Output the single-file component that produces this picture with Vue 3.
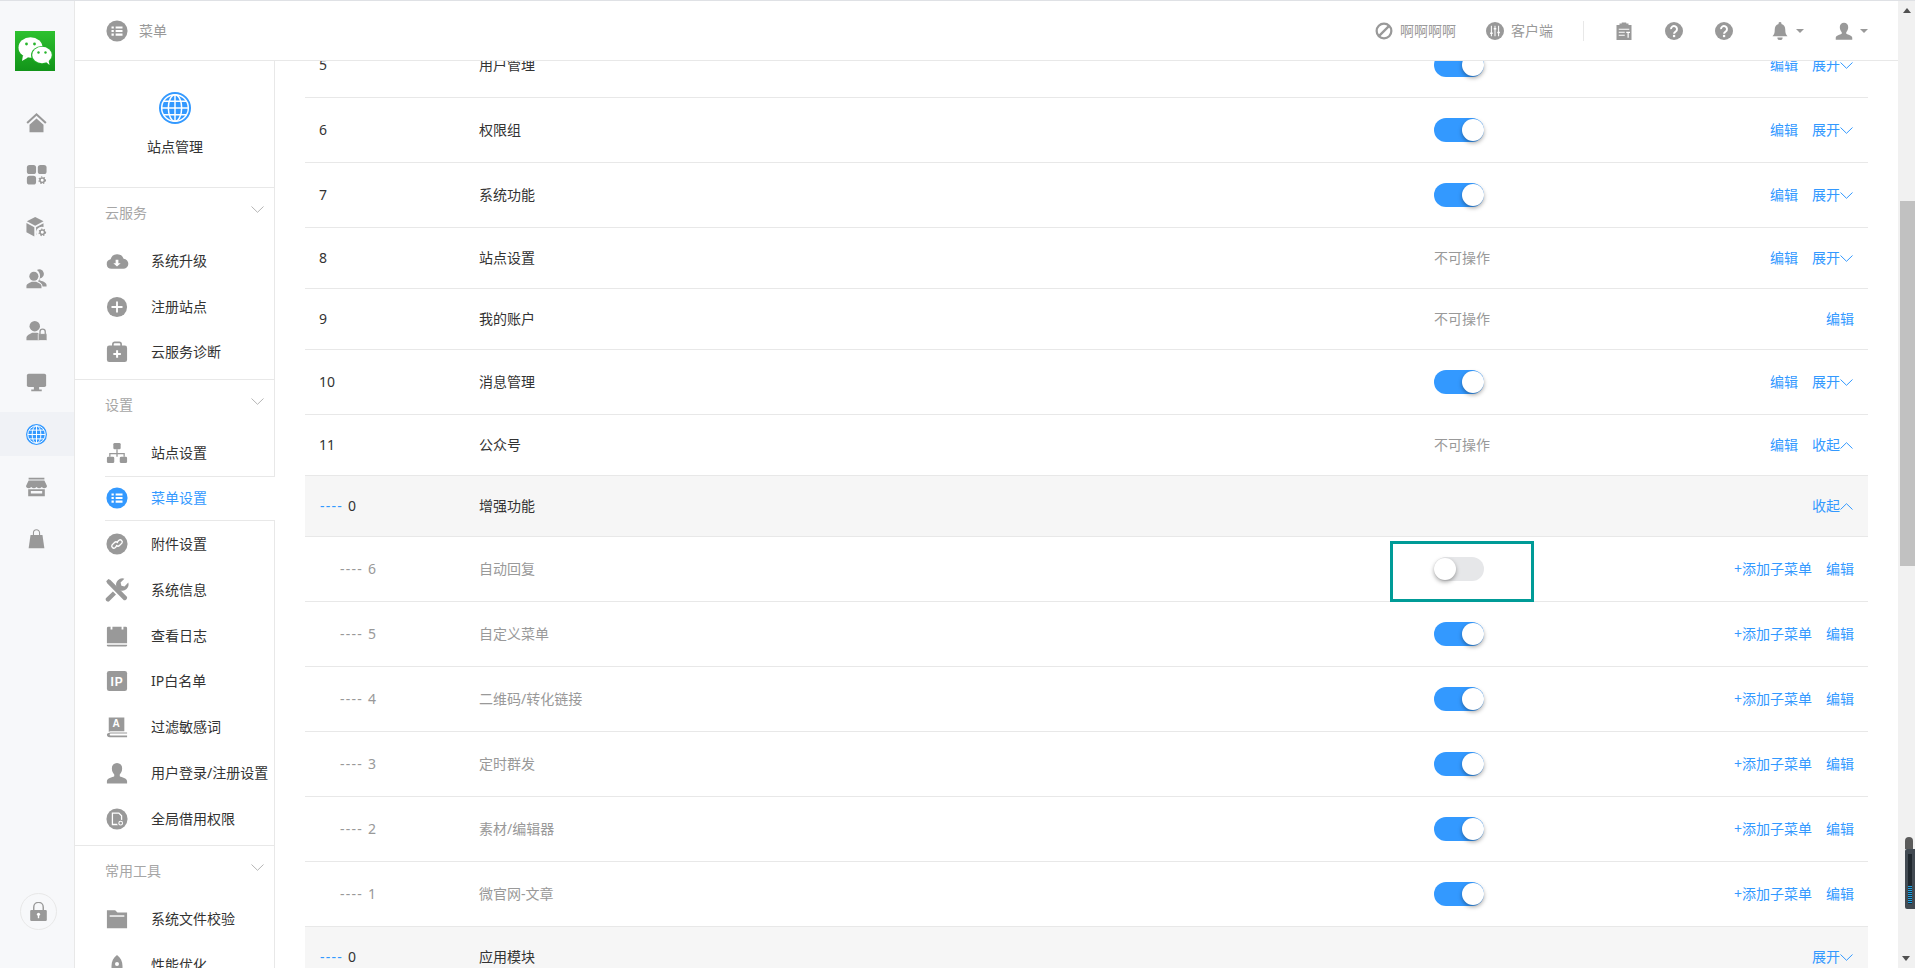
<script setup>
const gear = (x, y, r = 3) =>
  `<circle cx="${x}" cy="${y}" r="${r + 2.2}" fill="#fff"/><circle cx="${x}" cy="${y}" r="${r}" fill="none" stroke="currentColor" stroke-width="1.8"/><circle cx="${x}" cy="${y}" r="${r + 1.2}" fill="none" stroke="currentColor" stroke-width="1.3" stroke-dasharray="1.6 1.6"/>`
const globe = `<circle cx="12" cy="12" r="12"/><g fill="none" stroke="#fff" stroke-width="1.1"><circle cx="12" cy="12" r="10"/><ellipse cx="12" cy="12" rx="5" ry="10"/><path d="M12 2v20M2 12h20M3.6 7h16.8M3.6 17h16.8"/></g>`
const icons = {
  home: `<path d="M12 1 .5 11.6l1.600 1.800L12 4.400l9.900 9 1.600-1.800z"/><path d="M4 14.600 12 7.400l8 7.200V23H4z"/>`,
  apps: `<rect x="1" y="1" width="10.500" height="10.500" rx="3"/><rect x="13.500" y="1" width="10" height="10.500" rx="3"/><rect x="1" y="13.500" width="10.500" height="10" rx="3"/>${gear(18.5, 18.5, 2.6)}`,
  box: `<path d="M10.500 1 20 6l-9.500 5L1 6zM.5 8l9 4.800v10.700l-9-4.800zM11.500 12.800l8.500-4.600v4.400a6.500 6.500 0 0 0-8 8.500l-.5.3z"/>${gear(18.6, 18.6, 2.6)}`,
  users: `<circle cx="9" cy="9.500" r="5.200"/><path d="M.5 23v-2.400c0-2.700 3.800-3.700 6-5h5.200c2.200 1.300 6 2.300 6 5V23z"/><path d="M12.500 2.300a5.200 5.200 0 1 1 3.400 9.600l-.6 2c2.500 1.100 8.200 1.900 8.200 5.600V21h-4.500c-.3-3.200-3-4.600-5.400-5.800 1.600-1.700 2.400-3.600 2.400-5.800 0-3-1.100-5.200-3.500-7.100z"/>`,
  ulock: `<circle cx="10" cy="7" r="6"/><path d="M.5 23v-2.500c0-3.200 4-4.500 6.500-6h6c1 .6 2 1 3 1.500v7z"/><rect x="14" y="15.500" width="10" height="8" rx="1" stroke="#fff" stroke-width=".8"/><path d="M16 16v-2.500a3 3 0 0 1 6 0V16" fill="none" stroke="currentColor" stroke-width="1.500"/>`,
  monitor: `<rect x="1" y="2" width="22" height="15" rx="2"/><path d="M9 17h6v3H9zM6 20h12v2H6z"/>`,
  globe,
  store: `<path d="M3 2h18v2H3zM3 5h18l3 6.500c0 2-2 2.500-3 2.500s-2-.5-3-1.500c-1 1-2 1.500-3 1.500s-2-.5-3-1.500c-1 1-2 1.500-3 1.500s-2-.5-3-1.500c-1 1-2 1.500-3 1.500s-3-.5-3-2.500z"/><path fill-rule="evenodd" d="M2.500 15H21.500v8H2.500zM5.500 17v3h13v-3z"/>`,
  bag: `<path d="M5.200 8h13.600L21 23H3z"/><path d="M8.500 10V5.500a3.500 3.500 0 0 1 7 0V10" fill="none" stroke="currentColor" stroke-width="1.200"/>`,
  lock: `<rect x="1.500" y="10" width="21" height="14" rx="1.500"/><path d="M6 11V6.500a6 6 0 0 1 12 0V11" fill="none" stroke="currentColor" stroke-width="1.800"/><circle cx="12" cy="15.500" r="2" fill="#fff"/><path d="M11.100 16h1.800v4.500h-1.800z" fill="#fff"/>`,
  cloud: `<path d="M6 20.500a5.200 5.200 0 0 1-1-10.300A7.500 7.500 0 0 1 19.200 9.500 5.500 5.500 0 0 1 18.500 20.500z"/><path d="M10.500 10.500h3v4h2.500L12 18l-4-3.500h2.500z" fill="#fff"/>`,
  plus: `<circle cx="12" cy="12" r="11"/><path d="M11 6h2v5h5v2h-5v5h-2v-5H6v-2h5z" fill="#fff"/>`,
  kit: `<rect x="1" y="5" width="22" height="18" rx="2.500"/><path d="M7.500 6V3.500a2 2 0 0 1 2-2h5a2 2 0 0 1 2 2V6" fill="none" stroke="currentColor" stroke-width="1.800"/><path d="M11 10h2.200v3h3v2.200h-3v3H11v-3H8v-2.200h3z" fill="#fff"/>`,
  sitemap: `<rect x="8" y="1" width="8" height="7" rx="1.500"/><path d="M11.300 8h1.400v4h7.800v4h-1.400v-2.600h-6.400V16h-1.400v-2.600H4.900V16H3.500v-4h7.800z"/><rect x="1" y="16" width="8" height="7" rx="1.500"/><rect x="15" y="16" width="8" height="7" rx="1.500"/>`,
  list: `<circle cx="12" cy="12" r="11.500"/><path d="M6 7h2.500v2.300H6zM10.500 7H18v2.300h-7.500zM6 10.900h2.500v2.300H6zM10.500 10.900H18v2.300h-7.500zM6 14.800h2.500v2.300H6zM10.500 14.800H18v2.300h-7.500z" fill="#fff"/>`,
  link: `<circle cx="12" cy="12" r="11.500"/><g fill="none" stroke="#fff" stroke-width="1.500" stroke-linecap="round"><path d="M12.800 9.200l1.300-1.300a2.300 2.300 0 0 1 3.200 3.200l-2.600 2.600a2.300 2.300 0 0 1-3.200 0"/><path d="M11.200 14.800l-1.300 1.300a2.300 2.300 0 0 1-3.200-3.200l2.600-2.600a2.300 2.300 0 0 1 3.200 0"/></g>`,
  tools: `<g transform="translate(12 12) scale(1.120) translate(-12 -12)"><path d="M1.500 3.400 3.600 1.300l2 .9 15.800 16.100c1.700 1.700-1.500 4.900-3.200 3.200L2.400 5.400z"/><path d="M23 4.800 19.300 8.500l-3-.7-.8-3L19.200 1a6.200 6.200 0 0 0-7.800 7.800L9.800 10.600l3.500 3.600 1.800-1.800A6.200 6.200 0 0 0 23 4.800zM8 13.500l3 3-6.600 6.500c-1.600 1.400-4.600-1.400-3-3.200z"/></g>`,
  cal: `<path d="M1 3.500A1.500 1.500 0 0 1 2.500 2H5v3h2V2h10v3h2V2h2.500A1.500 1.500 0 0 1 23 3.500V20H1z"/><path d="M1 21.500h22v.5a1.500 1.500 0 0 1-1.500 1.500h-19A1.500 1.500 0 0 1 1 22z"/>`,
  ip: `<rect x="1" y="1" width="22" height="22" rx="2.500"/><text x="12" y="17" text-anchor="middle" font-family="Liberation Sans" font-weight="700" font-size="13" fill="#fff" letter-spacing="1">IP</text>`,
  book: `<path d="M3 1.500h17v15H5a2.500 2.500 0 0 0-2 1z"/><text x="11" y="12.500" text-anchor="middle" font-family="Liberation Sans" font-weight="700" font-size="11" fill="#fff">A</text><path d="M5 18h18v1.200H5a1 1 0 0 0 0 2h18v2H4a3 3 0 0 1-3-3c0-1 2-2.200 4-2.200z"/>`,
  user: `<path d="M12 1a5.600 5.600 0 0 1 5.600 6c0 3-1.200 5-2.600 6.500v2c2 1.300 8 2 8 5.500v2.500H1V21c0-3.500 6-4.200 8-5.500v-2C7.600 12 6.400 10 6.400 7A5.600 5.600 0 0 1 12 1z"/>`,
  doc: `<circle cx="12" cy="12" r="11.500"/><path d="M7 5.500h7l3 3V18H7z" fill="none" stroke="#fff" stroke-width="1.400"/><circle cx="16" cy="16.500" r="3.800"/><circle cx="16" cy="16.500" r="2" fill="none" stroke="#fff" stroke-width="1.200"/>`,
  folder: `<path d="M1 2.500h9l2.500 2.500H23v17H1z"/><path d="M4 8h16v1.500H4z" fill="#fff"/>`,
  rocket: `<path d="M12 1c4 3 6 7 6 12v6l2.500 4h-17L6 19v-6c0-5 2-9 6-12z"/><circle cx="12" cy="11" r="2.200" fill="#fff"/>`,
  ban: `<circle cx="12" cy="12" r="9.800" fill="none" stroke="currentColor" stroke-width="3"/><path d="M18.500 5.500 5.500 18.500" fill="none" stroke="currentColor" stroke-width="3"/>`,
  eq: `<circle cx="12" cy="12" r="12"/><path d="M7.200 5v14M12 5v14M16.800 5v14" stroke="#fff" stroke-width="1.400"/><path d="M5.500 14h3.400v2H5.500zM10.300 8h3.400v2h-3.400zM15.100 13h3.400v2h-3.400z" fill="#fff"/>`,
  clip: `<path d="M2 4h4V2h3V.5h6V2h3v2h4v20H2z"/><path d="M5 9h14v1.300H5zM5 13h8v1.300H5zM5 17h8v1.300H5z" fill="#fff"/><path d="M15 13h5v1.500h-1.700V21h-1.600v-6.500H15z" fill="#fff"/>`,
  help: `<circle cx="12" cy="12" r="12"/><path d="M8 9.500a4 4 0 1 1 6.300 3.200c-1.300 1-2.200 1.500-2.200 3" fill="none" stroke="#fff" stroke-width="2.600"/><rect x="10.600" y="17.200" width="3" height="3" fill="#fff"/>`,
  bell: `<path d="M12 0a1.800 1.800 0 0 1 1.800 2.500C17.500 3.500 19 6.500 19 10c0 5 1 7 3 9H2c2-2 3-4 3-9 0-3.500 1.500-6.500 5.200-7.500A1.800 1.800 0 0 1 12 0z"/><path d="M8.500 20.500h7a3.500 3.500 0 0 1-7 0z"/>`
}

const rail = ['home', 'apps', 'box', 'users', 'ulock', 'monitor', 'globe', 'store', 'bag']
const groups = [
  { title: '云服务', items: [['cloud', '系统升级'], ['plus', '注册站点'], ['kit', '云服务诊断']] },
  {
    title: '设置',
    items: [
      ['sitemap', '站点设置'], ['list', '菜单设置', true], ['link', '附件设置'], ['tools', '系统信息'],
      ['cal', '查看日志'], ['ip', 'IP白名单'], ['book', '过滤敏感词'], ['user', '用户登录/注册设置'], ['doc', '全局借用权限']
    ]
  },
  { title: '常用工具', items: [['folder', '系统文件校验'], ['rocket', '性能优化']] }
]
const rows = [
  { no: '5', name: '用户管理', on: true, edit: true, fold: '展开' },
  { no: '6', name: '权限组', on: true, edit: true, fold: '展开' },
  { no: '7', name: '系统功能', on: true, edit: true, fold: '展开' },
  { no: '8', name: '站点设置', locked: true, edit: true, fold: '展开' },
  { no: '9', name: '我的账户', locked: true, edit: true },
  { no: '10', name: '消息管理', on: true, edit: true, fold: '展开' },
  { no: '11', name: '公众号', locked: true, edit: true, fold: '收起' },
  { no: '0', name: '增强功能', kind: 'head', fold: '收起' },
  { no: '6', name: '自动回复', kind: 'sub', on: false, mark: true },
  { no: '5', name: '自定义菜单', kind: 'sub', on: true },
  { no: '4', name: '二维码/转化链接', kind: 'sub', on: true },
  { no: '3', name: '定时群发', kind: 'sub', on: true },
  { no: '2', name: '素材/编辑器', kind: 'sub', on: true },
  { no: '1', name: '微官网-文章', kind: 'sub', on: true },
  { no: '0', name: '应用模块', kind: 'head', fold: '展开' }
]
const hasToggle = (r) => r.on === true || r.on === false
</script>

<template>
  <div class="page">
    <aside class="rail">
      <div class="logo">
        <svg viewBox="0 0 40 40" width="40" height="40">
          <ellipse cx="15.500" cy="16.500" rx="12" ry="10.200" fill="#fff" />
          <path d="M8 24l-1 6 6-3.500z" fill="#fff" />
          <ellipse cx="27" cy="24" rx="11" ry="9" fill="#22b32a" />
          <ellipse cx="27" cy="24" rx="9.800" ry="8.200" fill="#fff" />
          <path d="M31 31l3.500 3-1-5z" fill="#fff" />
          <circle cx="11.500" cy="13" r="1.400" fill="#27b52c" />
          <circle cx="19.500" cy="13" r="1.400" fill="#27b52c" />
          <circle cx="23.500" cy="21.500" r="1.200" fill="#27b52c" />
          <circle cx="30.500" cy="21.500" r="1.200" fill="#27b52c" />
        </svg>
      </div>
      <div v-for="n in rail" :key="n" class="rail-item" :class="{ active: n === 'globe' }">
        <svg class="ri" viewBox="0 0 24 24" fill="currentColor" v-html="icons[n]"></svg>
      </div>
      <div class="rail-lock">
        <svg viewBox="0 0 24 24" width="19" height="19" fill="currentColor" v-html="icons.lock"></svg>
      </div>
    </aside>

    <div class="workspace">
      <header class="top">
        <div class="top-left">
          <svg class="hi big" viewBox="0 0 24 24" fill="currentColor" v-html="icons.list"></svg>
          <span>菜单</span>
        </div>
        <div class="top-right">
          <div class="tool"><svg class="hi" viewBox="0 0 24 24" fill="currentColor" v-html="icons.ban"></svg><span>啊啊啊啊</span></div>
          <div class="tool"><svg class="hi" viewBox="0 0 24 24" fill="currentColor" v-html="icons.eq"></svg><span>客户端</span></div>
          <i class="divider"></i>
          <div class="tool step1"><svg class="hi" viewBox="0 0 24 24" fill="currentColor" v-html="icons.clip"></svg></div>
          <div class="tool step2"><svg class="hi" viewBox="0 0 24 24" fill="currentColor" v-html="icons.help"></svg></div>
          <div class="tool step2"><svg class="hi" viewBox="0 0 24 24" fill="currentColor" v-html="icons.help"></svg></div>
          <div class="tool step8"><svg class="hi" viewBox="0 0 24 24" fill="currentColor" v-html="icons.bell"></svg><i class="caret"></i></div>
          <div class="tool step1"><svg class="hi" viewBox="0 0 24 24" fill="currentColor" v-html="icons.user"></svg><i class="caret"></i></div>
        </div>
      </header>

      <div class="body">
        <nav class="side">
          <div class="side-head">
            <svg class="side-globe" viewBox="0 0 24 24" fill="currentColor" v-html="icons.globe"></svg>
            <span>站点管理</span>
          </div>
          <section v-for="g in groups" :key="g.title" class="group">
            <div class="group-title">
              <span>{{ g.title }}</span>
              <svg viewBox="0 0 13 7" width="13" height="7"><path d="M.5.500 6.500 6.300 12.500.500" fill="none" stroke="#b5b5b5" /></svg>
            </div>
            <div v-for="it in g.items" :key="it[1]" class="item" :class="{ current: it[2] }">
              <svg class="item-icon" viewBox="0 0 24 24" fill="currentColor" v-html="icons[it[0]]"></svg>
              <span>{{ it[1] }}</span>
            </div>
          </section>
        </nav>

        <main class="main">
          <div class="table">
            <div v-for="r in rows" :key="r.name" class="row" :class="[r.kind, { short: !hasToggle(r) }]">
              <div class="no"><span v-if="r.kind" class="dash">----</span>{{ r.no }}</div>
              <div class="name">{{ r.name }}</div>
              <div class="state">
                <div v-if="hasToggle(r)" class="switch" :class="{ on: r.on }"><i></i></div>
                <span v-else-if="r.locked" class="locked">不可操作</span>
                <div v-if="r.mark" class="mark"></div>
              </div>
              <div class="ops">
                <a v-if="r.kind === 'sub'">+添加子菜单</a>
                <a v-if="r.edit || r.kind === 'sub'">编辑</a>
                <a v-if="r.fold" class="fold">{{ r.fold }}<svg viewBox="0 0 14 7" width="14" height="7" :class="{ up: r.fold === '收起' }"><path d="M.5.500 6.500 6.300 12.500.500" fill="none" stroke="#3399ff" /></svg></a>
              </div>
            </div>
          </div>
        </main>
      </div>
    </div>

    <div class="scrollbar">
      <i class="arrow up"></i>
      <div class="thumb"></div>
      <i class="arrow down"></i>
      <div class="gadget"><span></span><div class="meter"><b></b></div></div>
    </div>
  </div>
</template>

<style scoped>
.page {
  display: flex;
  height: 968px;
  box-sizing: border-box;
  border-top: 1px solid #dfe1e5;
  font-family: "Noto Sans", "Noto Sans CJK SC", sans-serif;
  font-size: 14px;
  line-height: 20px;
  color: #333;
  background: #fff;
  overflow: hidden;
}
svg { display: block; flex: none; }

.rail {
  position: relative;
  width: 75px;
  flex: none;
  box-sizing: border-box;
  background: #f7f8fa;
  border-right: 1px solid #e8e8e8;
  padding-top: 30px;
  color: #999;
  display: flex;
  flex-direction: column;
}
.logo {
  width: 40px;
  height: 40px;
  margin: 0 0 29px 15px;
  background: linear-gradient(#2dc12f, #129419);
}
.rail-item {
  height: 44px;
  margin-bottom: 8px;
  padding-right: 1px;
  display: flex;
  align-items: center;
  justify-content: center;
}
.rail-item.active { background: #f0f2f6; color: #3399ff; }
.ri { width: 21px; height: 21px; }
.rail-lock {
  width: 35px;
  height: 35px;
  margin: auto 0 38px 20px;
  border: 1px solid #e8e8e8;
  border-radius: 50%;
  display: flex;
  align-items: center;
  justify-content: center;
}

.workspace { flex: 1; min-width: 0; display: flex; flex-direction: column; }
.top {
  height: 60px;
  flex: none;
  box-sizing: border-box;
  border-bottom: 1px solid #e8e8e8;
  padding: 0 30px 0 31px;
  display: flex;
  align-items: center;
  justify-content: space-between;
  color: #999;
}
.top-left { display: flex; align-items: center; gap: 11px; }
.top-right { display: flex; align-items: center; gap: 30px; }
.tool { display: flex; align-items: center; gap: 7px; }
.step1 { margin-left: 1px; }
.step2 { margin-left: 2px; }
.step8 { margin-left: 8px; }
.hi { width: 18px; height: 18px; }
.hi.big { width: 22px; height: 22px; }
.divider { width: 1px; height: 20px; background: #e8e8e8; }
.caret {
  width: 0;
  height: 0;
  border: 4px solid transparent;
  border-top: 4px solid #999;
  border-bottom: 0;
}

.body { flex: 1; min-height: 0; display: flex; }
.side {
  width: 200px;
  flex: none;
  box-sizing: border-box;
  border-right: 1px solid #e8e8e8;
}
.side-head {
  height: 127px;
  box-sizing: border-box;
  border-bottom: 1px solid #e8e8e8;
  padding-top: 31px;
  display: flex;
  flex-direction: column;
  align-items: center;
  margin-right: -1px;
}
.side-globe { width: 32px; height: 32px; color: #3399ff; margin-bottom: 13px; }
.group { border-bottom: 1px solid #e8e8e8; padding: 0 0 3.5px 30px; margin-right: -1px; }
.group-title {
  height: 50px;
  display: flex;
  justify-content: space-between;
  align-items: center;
  padding-right: 11px;
  color: #a6a6a6;
}
.group-title svg { margin-top: -7px; }
.item {
  height: 45.75px;
  box-sizing: border-box;
  display: flex;
  align-items: center;
  gap: 22px;
}
.item-icon { width: 22px; height: 22px; padding: 0 1px; color: #999; overflow: visible; }
.item.current {
  position: relative;
  border-top: 1px solid #e8e8e8;
  border-bottom: 1px solid #e8e8e8;
  background: #fff;
  color: #3399ff;
}
.item.current .item-icon { color: #3399ff; }

.main { flex: 1; min-width: 0; overflow: hidden; padding: 0 30px; }
.table { margin-top: -28px; }
.row {
  height: 65px;
  box-sizing: border-box;
  display: grid;
  grid-template-columns: 174px 955px 120px 1fr;
  align-items: center;
  border-bottom: 1px solid #e8e8e8;
}
.row.short { height: 61px; }
.row.head { background: #f6f6f6; }
.row.sub .no, .row.sub .name { color: #999; }
.no { padding-left: 14px; }
.row.head .no { padding-left: 15px; }
.row.sub .no { padding-left: 35px; }
.dash { letter-spacing: 1.250px; margin-right: 5px; color: #3399ff; }
.row.sub .dash { color: #999; }
.state { position: relative; }
.locked { color: #999; }
.switch {
  position: relative;
  width: 50px;
  height: 24px;
  border-radius: 12px;
  background: #e6e7e9;
}
.switch.on { background: #3399ff; }
.switch i {
  position: absolute;
  top: 1px;
  left: 0;
  width: 22px;
  height: 22px;
  border-radius: 50%;
  background: #fff;
  box-shadow: 0 2px 4px rgba(0, 0, 0, 0.35);
}
.switch.on i { left: 28px; }
.mark {
  position: absolute;
  left: -44px;
  top: -16px;
  width: 144px;
  height: 61px;
  box-sizing: border-box;
  border: 3px solid #009b97;
}
.ops {
  display: flex;
  justify-content: flex-end;
  align-items: center;
  gap: 14px;
  padding-right: 14px;
  color: #3399ff;
}
.fold { display: flex; align-items: center; }
.fold svg.up { transform: rotate(180deg) translateX(1px); }

.scrollbar {
  position: relative;
  width: 17px;
  flex: none;
  background: #f1f1f1;
  display: flex;
  flex-direction: column;
}
.arrow { width: 0; height: 0; border: 4px solid transparent; margin: 7px 0 0 5px; }
.arrow.up { border-top: 0; border-bottom: 5px solid #505050; }
.arrow.down { border-bottom: 0; border-top: 5px solid #505050; margin: auto 0 7px 4px; }
.thumb { height: 365px; margin: 188px 0 0 2px; background: #c1c1c1; }
.gadget {
  position: absolute;
  right: 0;
  top: 836px;
  width: 10px;
}
.gadget span {
  display: block;
  width: 8px;
  height: 12px;
  border-radius: 4px 4px 0 0;
  background: #5b5b5b;
}
.meter {
  height: 60px;
  box-sizing: border-box;
  padding: 5px 3px;
  background: #424a52;
  border-radius: 2px 0 0 2px;
}
.meter b {
  display: block;
  height: 100%;
  background: repeating-linear-gradient(#1f9fe0 0 1px, #173040 1px 2px) bottom / 100% 18px no-repeat, #20282f;
}
</style>

<style>
html, body { margin: 0; overflow: hidden; }
</style>
